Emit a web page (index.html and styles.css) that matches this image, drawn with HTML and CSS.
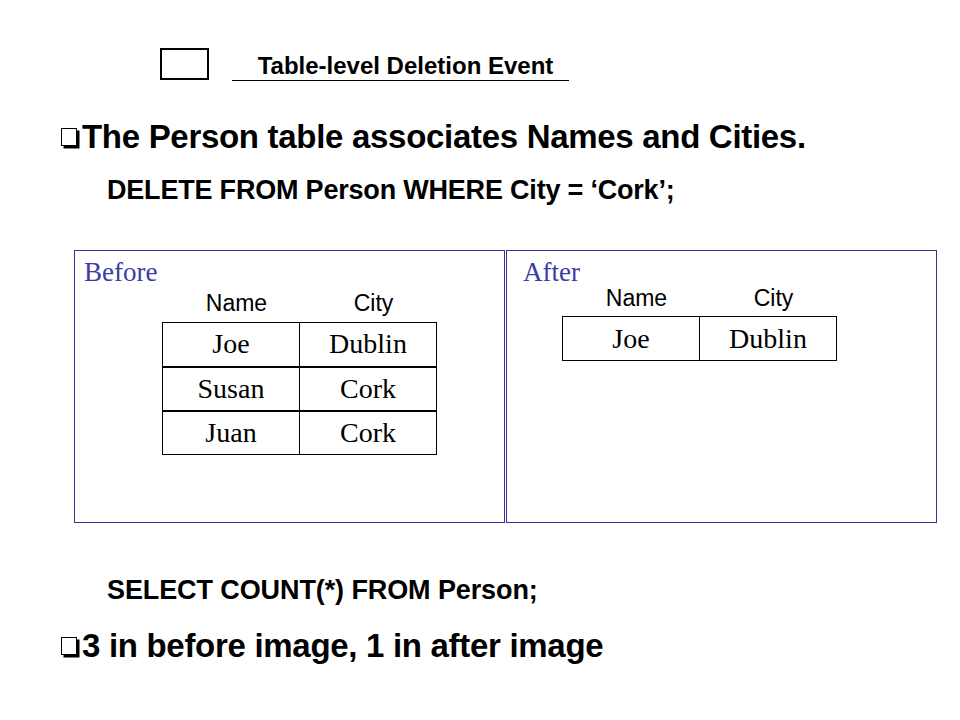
FILE: index.html
```html
<!DOCTYPE html>
<html lang="en">
<head>
<meta charset="utf-8">
<title>Table-level Deletion Event</title>
<link rel="stylesheet" href="styles.css">
</head>
<body>
<div class="slide">
  <header class="title-row">
    <span class="frame"></span>
    <h1 class="title">Table-level Deletion Event</h1>
  </header>

  <p class="bullet"><span class="tick"></span>The Person table associates Names and Cities.</p>
  <p class="code code-first">DELETE FROM Person WHERE City = ‘Cork’;</p>

  <div class="panels">
    <section class="panel panel-before">
      <div class="label">Before</div>
      <div class="heads"><span>Name</span><span>City</span></div>
      <table class="grid">
        <tr><td>Joe</td><td>Dublin</td></tr>
        <tr><td>Susan</td><td>Cork</td></tr>
        <tr><td>Juan</td><td>Cork</td></tr>
      </table>
    </section>
    <section class="panel panel-after">
      <div class="label">After</div>
      <div class="heads"><span>Name</span><span>City</span></div>
      <table class="grid">
        <tr><td>Joe</td><td>Dublin</td></tr>
      </table>
    </section>
  </div>

  <p class="code code-second">SELECT COUNT(*) FROM Person;</p>
  <p class="bullet bullet-last"><span class="tick"></span>3 in before image, 1 in after image</p>
</div>
</body>
</html>
```

FILE: styles.css
```css
* { box-sizing: border-box; }

html, body {
  margin: 0;
  padding: 0;
  background: #ffffff;
}

body {
  font-family: "Liberation Sans", Arial, sans-serif;
  color: #000;
}

.slide {
  width: 960px;
  height: 720px;
  padding-top: 48px;
}

/* header */
.title-row {
  display: flex;
  align-items: flex-start;
  margin-left: 160px;
}

.frame {
  width: 49px;
  height: 32px;
  border: 2px solid #000;
}

.title {
  margin: 0 0 0 23px;
  width: 337px;
  padding: 4px 0 0 10px;
  font-size: 24px;
  line-height: 28px;
  font-weight: bold;
  text-align: center;
  border-bottom: 1px solid #000;
  white-space: nowrap;
}

/* bullets */
.bullet {
  margin: 38px 0 0 61px;
  font-size: 33px;
  line-height: 36px;
  font-weight: bold;
  letter-spacing: -0.3px;
  white-space: nowrap;
}

.bullet-last {
  margin-top: 23px;
}

.tick {
  display: inline-block;
  width: 16px;
  height: 18px;
  border: 1.5px solid #000;
  box-shadow: 2.5px 2.5px 0 #000;
  margin-right: 5px;
  vertical-align: 2px;
}

.code {
  margin: 20px 0 0 107px;
  font-size: 27px;
  line-height: 30px;
  font-weight: bold;
  letter-spacing: -0.2px;
  white-space: nowrap;
}

.code-second {
  margin-top: 52px;
  letter-spacing: -0.1px;
}

/* panels */
.panels {
  display: flex;
  gap: 1px;
  margin: 45px 0 0 74px;
}

.panel {
  width: 431px;
  height: 273px;
  border: 1px solid #333399;
  padding-top: 6px;
}

.label {
  font-family: "Liberation Serif", "Times New Roman", serif;
  font-size: 27px;
  line-height: 30px;
  color: #3b3ba8;
}

.heads {
  display: grid;
  grid-template-columns: 137px 137px;
  font-size: 23px;
  line-height: 24px;
  text-align: center;
  padding-left: 6px;
}

.grid {
  border-collapse: collapse;
  font-family: "Liberation Serif", "Times New Roman", serif;
  font-size: 28px;
}

.grid td {
  width: 137px;
  height: 44px;
  padding: 0;
  border: 1px solid #000;
  text-align: center;
  vertical-align: middle;
  line-height: 30px;
}

.grid tr + tr td {
  border-top: 2px solid #000;
}

.panel-before .label { padding-left: 9px; }
.panel-before .heads { margin: 4px 0 0 87px; }
.panel-before .grid { margin: 7px 0 0 87px; }

.panel-after .label { padding-left: 16px; }
.panel-after .heads { margin: -1px 0 0 55px; }
.panel-after .grid { margin: 6px 0 0 55px; }
```
